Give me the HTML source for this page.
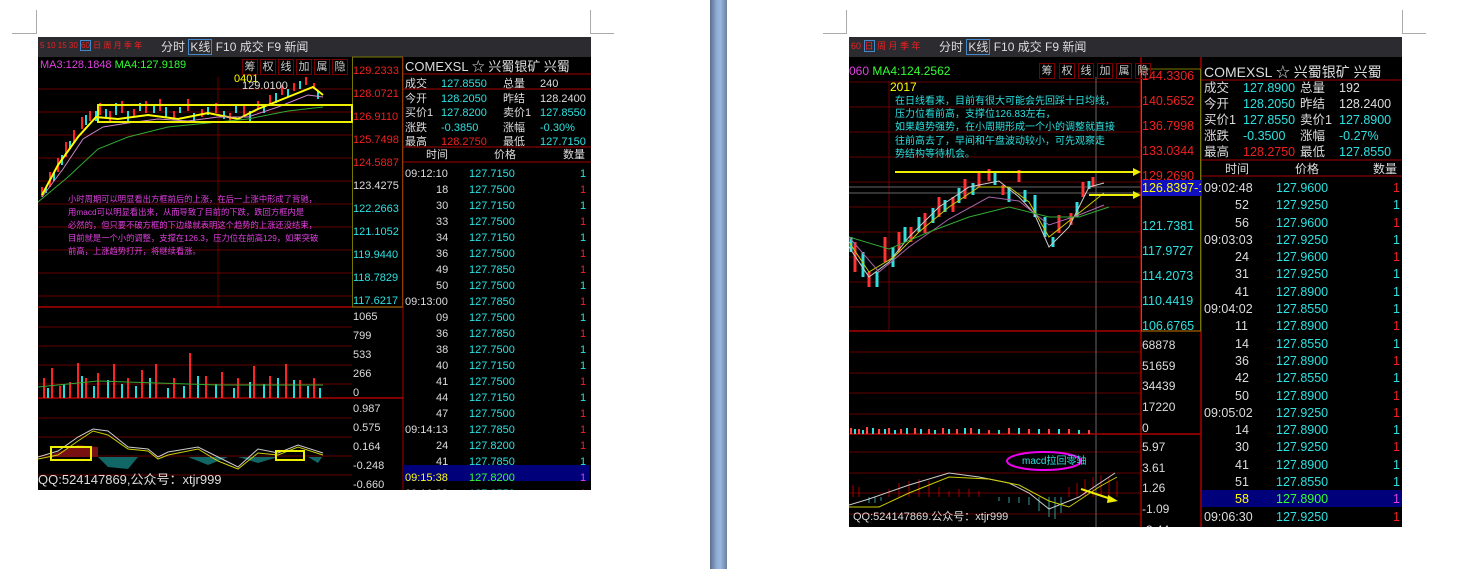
<!DOCTYPE html>
<html><head><meta charset="utf-8"><style>
*{margin:0;padding:0;box-sizing:border-box}
body{width:1479px;height:569px;background:#fff;position:relative;overflow:hidden;font-family:"Liberation Sans","Noto Sans CJK SC",sans-serif}
.a{position:absolute;white-space:nowrap;line-height:1}
.img{position:absolute;background:#000;overflow:hidden}
.tb{position:absolute;left:0;top:0;right:0;height:20px;background:#2b2b30;color:#ddd;font-size:12px}
.c{color:#2ee0e0}.r{color:#f02020}.w{color:#ddd}.y{color:#ff0}.m{color:#e040e0}.g{color:#3f3}
.f12{font-size:12px}.f11{font-size:11px}
.btn{position:absolute;top:3px;width:16px;height:16px;border:1px solid #700;font-size:11px;text-align:center;line-height:14px;color:#ccc}
</style></head><body>
<div style="position:absolute;left:36px;top:10px;width:1px;height:24px;background:#aaa"></div>
<div style="position:absolute;left:12px;top:33px;width:25px;height:1px;background:#aaa"></div>
<div style="position:absolute;left:590px;top:10px;width:1px;height:24px;background:#aaa"></div>
<div style="position:absolute;left:590px;top:33px;width:24px;height:1px;background:#aaa"></div>
<div style="position:absolute;left:846px;top:10px;width:1px;height:24px;background:#aaa"></div>
<div style="position:absolute;left:823px;top:33px;width:24px;height:1px;background:#aaa"></div>
<div style="position:absolute;left:1402px;top:10px;width:1px;height:24px;background:#aaa"></div>
<div style="position:absolute;left:1402px;top:33px;width:24px;height:1px;background:#aaa"></div>
<div style="position:absolute;left:710px;top:0;width:17px;height:569px;background:linear-gradient(90deg,#5b6f8f,#8fadd6 40%,#9bb8df 60%,#6a7fa0)"></div>

<!-- LEFT IMAGE -->
<div class="img" style="left:38px;top:37px;width:553px;height:453px">
 <div class="tb"><span class="a r" style="left:2px;top:5px;font-size:8px">5 10 15 30 <span style="border:1px solid #48c">60</span> 日 周 月 季 年</span>
 <span class="a" style="left:123px;top:4px">分时 <span style="border:1px solid #48c;padding:0 1px">K线</span> F10 成交 F9 新闻</span></div>
 <svg style="position:absolute;left:0;top:0" width="553" height="453">
  <g stroke="#600" stroke-width="1">
   <line x1="0" y1="52" x2="314" y2="52"/><line x1="0" y1="75" x2="314" y2="75"/><line x1="0" y1="98" x2="314" y2="98"/><line x1="0" y1="121" x2="314" y2="121"/><line x1="0" y1="144" x2="314" y2="144"/><line x1="0" y1="167" x2="314" y2="167"/><line x1="0" y1="190" x2="314" y2="190"/><line x1="0" y1="213" x2="314" y2="213"/><line x1="0" y1="236" x2="314" y2="236"/><line x1="0" y1="259" x2="314" y2="259"/>
   <line x1="0" y1="290" x2="314" y2="290"/><line x1="0" y1="309" x2="314" y2="309"/><line x1="0" y1="328" x2="314" y2="328"/><line x1="0" y1="347" x2="314" y2="347"/>
   <line x1="0" y1="381" x2="314" y2="381"/><line x1="0" y1="400" x2="314" y2="400"/><line x1="0" y1="419" x2="314" y2="419"/><line x1="0" y1="438" x2="314" y2="438"/>
   <line x1="180" y1="40" x2="180" y2="270"/>
  </g>
  <g stroke="#a00" stroke-width="1.5"><line x1="0" y1="270" x2="365" y2="270"/><line x1="0" y1="361" x2="365" y2="361"/></g>
  <rect x="314.5" y="20" width="50" height="250" fill="none" stroke="#770" />
  <line x1="365" y1="20" x2="365" y2="453" stroke="#a00"/>
  <g stroke="#f22" stroke-width="2">
   <path d="M4 160v-10M12 150v-15M20 135v-14M28 120v-15M36 105v-12M44 92v-12M52 84v-10M62 78v-12M72 84v-10M84 76v-12M96 80v-8M108 76v-12M122 74v-12M136 82v-8M150 74v-12M164 80v-8M178 76v-10M192 84v-8M206 78v-10M220 72v-8M232 68v-10M244 58v-10M256 54v-8M268 48v-8M276 52v-6"/>
  </g>
  <g stroke="#2dd" stroke-width="2">
   <path d="M8 156v-6M16 144v-8M24 128v-10M32 112v-8M48 88v-10M58 84v-10M68 80v-8M78 78v-12M90 84v-10M102 74v-8M116 76v-8M128 80v-10M142 76v-6M156 86v-10M170 78v-8M186 82v-8M198 76v-8M212 84v-10M226 76v-8M238 66v-10M250 60v-8M262 52v-8M280 62v-8"/>
  </g>
  <polyline fill="none" stroke="#ff0" stroke-width="2" points="4,158 20,128 40,100 58,80 80,82 110,78 140,82 170,76 200,82 220,72 250,60 275,50 285,58"/>
  <polyline fill="none" stroke="#c8c" stroke-width="1" points="4,160 25,132 45,102 65,90 90,86 120,82 150,84 180,80 210,80 240,70 270,58 285,60"/>
  <polyline fill="none" stroke="#3a3" stroke-width="1" points="0,165 30,140 60,112 90,100 130,90 170,86 210,82 250,74 285,70"/>
  <rect x="60" y="68" width="254" height="17" fill="none" stroke="#ee0" stroke-width="2"/>
  <g stroke="#f22" stroke-width="2"><path d="M6 361v-20M14 361v-30M22 361v-12M32 361v-16M40 361v-35M48 361v-20M60 361v-25M76 361v-34M90 361v-20M104 361v-28M118 361v-34M136 361v-20M152 361v-45M168 361v-22M184 361v-26M200 361v-20M216 361v-32M232 361v-22M248 361v-34M262 361v-18M276 361v-20"/></g>
  <g stroke="#2dd" stroke-width="2"><path d="M10 361v-10M26 361v-14M44 361v-22M56 361v-12M70 361v-18M84 361v-14M98 361v-12M112 361v-20M130 361v-10M146 361v-12M160 361v-22M178 361v-14M196 361v-10M212 361v-16M226 361v-14M240 361v-20M256 361v-18M270 361v-12M282 361v-10"/></g>
  <polyline fill="none" stroke="#3a3" points="0,350 60,344 120,346 180,348 240,348 285,348"/>
  <path d="M12 418 L40 408 L60 410 V420 H12Z" fill="#711"/>
  <path d="M60 420 L70 430 L90 432 L100 420Z" fill="#166"/>
  <path d="M150 420 L170 428 L190 420Z M200 420 L220 426 L240 420Z M270 420 L280 426 L284 420Z" fill="#166"/>
  <polyline fill="none" stroke="#ccc" points="0,420 20,414 40,400 55,392 70,394 90,410 110,412 120,420 130,415 160,410 180,420 200,430 220,412 240,416 260,408 285,416"/>
  <polyline fill="none" stroke="#cc0" points="0,422 20,418 40,404 55,394 70,398 90,412 110,414 120,422 130,418 160,412 180,424 200,432 220,416 240,418 260,410 285,418"/>
  <rect x="13" y="410" width="40" height="13" fill="none" stroke="#ee0" stroke-width="2"/>
  <rect x="238" y="414" width="28" height="9" fill="none" stroke="#ee0" stroke-width="2"/>
  <g stroke="#a00"><line x1="365" y1="37" x2="553" y2="37"/><line x1="365" y1="52" x2="553" y2="52"/><line x1="365" y1="110" x2="553" y2="110"/><line x1="365" y1="125" x2="553" y2="125"/></g>
 </svg>
 <span class="a m f11" style="left:2px;top:23px">MA3:128.1848 <span class="g">MA4:127.9189</span></span>
 <span class="btn" style="left:204px;top:22px">筹</span><span class="btn r" style="left:222px;top:22px">权</span><span class="btn r" style="left:240px;top:22px">线</span><span class="btn" style="left:258px;top:22px">加</span><span class="btn" style="left:276px;top:22px">属</span><span class="btn" style="left:294px;top:22px">隐</span>
 <span class="a y f11" style="left:196px;top:37px">0401</span>
 <span class="a w f11" style="left:204px;top:44px">129.0100</span>
 <div class="a m" style="left:30px;top:156px;font-size:8.3px;line-height:13px">小时周期可以明显看出方框前后的上涨，在后一上涨中形成了背驰，<br>用macd可以明显看出来，从而导致了目前的下跌，跌回方框内是<br>必然的，但只要不破方框的下边缘就表明这个趋势的上涨还没结束，<br>目前就是一个小的调整，支撑在126.3，压力位在前高129，如果突破<br>前高，上涨趋势打开，将继续看涨。</div>
 <span class="a w" style="left:0px;top:436px;font-size:13px">QQ:524147869,公众号：xtjr999</span>
 <div class="a f11" style="left:315px;top:23px;line-height:23px">
  <div class="r">129.2333</div><div class="r">128.0721</div><div class="r">126.9110</div><div class="r">125.7498</div><div class="r">124.5887</div><div class="w">123.4275</div><div class="c">122.2663</div><div class="c">121.1052</div><div class="c">119.9440</div><div class="c">118.7829</div><div class="c">117.6217</div></div>
 <div class="a w f11" style="left:315px;top:271px;line-height:19px"><div>1065</div><div>799</div><div>533</div><div>266</div><div>0</div></div>
 <div class="a w f11" style="left:315px;top:363px;line-height:19px"><div>0.987</div><div>0.575</div><div>0.164</div><div>-0.248</div><div>-0.660</div></div>
 <span class="a w f12" style="left:367px;top:23px;font-size:13px">COMEXSL ☆ 兴蜀银矿 兴蜀</span>
 <div class="a f11 w" style="left:367px;top:40px;line-height:14.5px">
  <div>成交 <span class="c" style="position:absolute;left:36px">127.8550</span><span style="position:absolute;left:98px">总量</span><span style="position:absolute;left:135px">240</span></div>
  <div>今开 <span class="c" style="position:absolute;left:36px">128.2050</span><span style="position:absolute;left:98px">昨结</span><span style="position:absolute;left:135px">128.2400</span></div>
  <div>买价1<span class="c" style="position:absolute;left:36px">127.8200</span><span style="position:absolute;left:98px">卖价1</span><span class="c" style="position:absolute;left:135px">127.8550</span></div>
  <div>涨跌 <span class="c" style="position:absolute;left:36px">-0.3850</span><span style="position:absolute;left:98px">涨幅</span><span class="c" style="position:absolute;left:135px">-0.30%</span></div>
  <div>最高 <span class="r" style="position:absolute;left:36px">128.2750</span><span style="position:absolute;left:98px">最低</span><span class="c" style="position:absolute;left:135px">127.7150</span></div>
 </div>
 <span class="a w f11" style="left:388px;top:113px">时间</span><span class="a w f11" style="left:456px;top:113px">价格</span><span class="a w f11" style="left:525px;top:113px">数量</span>
 <div style="position:absolute;left:365px;top:428px;width:186px;height:16px;background:#00007a"></div>
 <div class="a f11" style="left:367px;top:129px;line-height:16px;width:186px">
  <div class="w">09:12:10</div><div class="w" style="padding-left:31px">18</div><div class="w" style="padding-left:31px">30</div><div class="w" style="padding-left:31px">33</div><div class="w" style="padding-left:31px">34</div><div class="w" style="padding-left:31px">36</div><div class="w" style="padding-left:31px">49</div><div class="w" style="padding-left:31px">50</div><div class="w">09:13:00</div><div class="w" style="padding-left:31px">09</div><div class="w" style="padding-left:31px">36</div><div class="w" style="padding-left:31px">38</div><div class="w" style="padding-left:31px">40</div><div class="w" style="padding-left:31px">41</div><div class="w" style="padding-left:31px">44</div><div class="w" style="padding-left:31px">47</div><div class="w">09:14:13</div><div class="w" style="padding-left:31px">24</div><div class="w" style="padding-left:31px">41</div><div class="y">09:15:38</div><div class="w">09:16:38</div>
 </div>
 <div class="a f11 c" style="left:431px;top:129px;line-height:16px">
  <div>127.7150</div><div>127.7500</div><div>127.7150</div><div>127.7500</div><div>127.7150</div><div>127.7500</div><div>127.7850</div><div>127.7500</div><div>127.7850</div><div>127.7500</div><div>127.7850</div><div>127.7500</div><div>127.7150</div><div>127.7500</div><div>127.7150</div><div>127.7500</div><div>127.7850</div><div>127.8200</div><div>127.7850</div><div class="g">127.8200</div><div>127.8550</div>
 </div>
 <div class="a f11" style="left:542px;top:129px;line-height:16px">
  <div class="c">1</div><div class="r">1</div><div class="c">1</div><div class="r">1</div><div class="c">1</div><div class="r">1</div><div class="r">1</div><div class="c">1</div><div class="r">1</div><div class="c">1</div><div class="r">1</div><div class="c">1</div><div class="c">1</div><div class="r">1</div><div class="c">1</div><div class="r">1</div><div class="r">1</div><div class="r">1</div><div class="c">1</div><div class="m">1</div><div class="r">1</div>
 </div>
</div>

<!-- RIGHT IMAGE -->
<div class="img" style="left:849px;top:37px;width:553px;height:490px">
 <div class="tb"><span class="a r" style="left:2px;top:5px;font-size:9px">60 <span style="border:1px solid #48c">日</span> 周 月 季 年</span>
 <span class="a" style="left:90px;top:4px">分时 <span style="border:1px solid #48c;padding:0 1px">K线</span> F10 成交 F9 新闻</span></div>
 <svg style="position:absolute;left:0;top:0" width="553" height="490">
  <g stroke="#600">
   <line x1="0" y1="45" x2="292" y2="45"/><line x1="0" y1="70" x2="292" y2="70"/><line x1="0" y1="95" x2="292" y2="95"/><line x1="0" y1="120" x2="292" y2="120"/><line x1="0" y1="145" x2="292" y2="145"/><line x1="0" y1="170" x2="292" y2="170"/><line x1="0" y1="195" x2="292" y2="195"/><line x1="0" y1="220" x2="292" y2="220"/><line x1="0" y1="245" x2="292" y2="245"/><line x1="0" y1="270" x2="292" y2="270"/>
   <line x1="0" y1="315" x2="292" y2="315"/><line x1="0" y1="336" x2="292" y2="336"/><line x1="0" y1="356" x2="292" y2="356"/><line x1="0" y1="377" x2="292" y2="377"/>
   <line x1="0" y1="415" x2="292" y2="415"/><line x1="0" y1="436" x2="292" y2="436"/><line x1="0" y1="456" x2="292" y2="456"/><line x1="0" y1="477" x2="292" y2="477"/>
   <line x1="40" y1="45" x2="40" y2="294"/>
  </g>
  <g stroke="#666"><line x1="0" y1="150" x2="292" y2="150"/><line x1="0" y1="156" x2="292" y2="156"/><line x1="247" y1="40" x2="247" y2="490"/></g>
  <g stroke="#a00" stroke-width="1.5"><line x1="0" y1="294" x2="352" y2="294"/><line x1="0" y1="397" x2="352" y2="397"/><line x1="292" y1="20" x2="292" y2="490"/><line x1="352" y1="20" x2="352" y2="490"/></g>
  <rect x="292.5" y="32" width="59" height="262" fill="none" stroke="#770"/>
  <g stroke="#f33" stroke-width="3"><path d="M6 235v-30M20 250v-15M36 225v-25M50 215v-20M62 205v-15M76 196v-20M90 180v-20M104 175v-15M116 162v-20M130 150v-15M140 144v-12M154 158v-10M170 145v-12M210 196v-18M222 188v-12M234 160v-15M244 150v-10"/></g>
  <g stroke="#3dd" stroke-width="3"><path d="M2 215v-15M14 240v-25M28 250v-15M44 230v-20M56 205v-15M70 195v-15M84 186v-15M96 175v-12M110 166v-15M124 158v-12M146 148v-12M160 165v-15M176 165v-12M186 180v-22M196 200v-20M204 210v-10M228 180v-15M240 152v-8"/></g>
  <polyline fill="none" stroke="#ccc" points="0,210 20,240 40,225 60,200 90,170 120,150 150,144 170,160 185,176 200,210 220,190 240,150 255,146"/>
  <polyline fill="none" stroke="#cc0" points="0,205 20,235 45,220 70,195 100,170 130,150 160,150 180,165 200,200 225,180 255,156"/>
  <polyline fill="none" stroke="#a6a" points="0,200 30,235 60,210 100,182 140,160 170,164 200,188 230,178 255,168"/>
  <polyline fill="none" stroke="#3a3" points="0,200 40,212 80,195 120,180 160,170 200,180 230,180 260,170"/>
  <line x1="46" y1="135" x2="290" y2="135" stroke="#ee0" stroke-width="2"/><polygon points="292,135 284,131 284,139" fill="#ee0"/>
  <line x1="240" y1="158" x2="290" y2="158" stroke="#ee0" stroke-width="2"/><polygon points="292,158 284,154 284,162" fill="#ee0"/>
  <g stroke="#f44" stroke-width="2"><path d="M2 397v-6M10 397v-5M18 397v-7M30 397v-5M40 397v-6M52 397v-5M66 397v-6M80 397v-5M94 397v-6M108 397v-5M122 397v-6M140 397v-4M160 397v-6M180 397v-5M200 397v-5M220 397v-5M240 397v-4"/></g>
  <g stroke="#3dd" stroke-width="2"><path d="M6 397v-5M14 397v-4M24 397v-6M36 397v-5M46 397v-4M58 397v-6M72 397v-5M86 397v-4M100 397v-5M116 397v-6M130 397v-5M150 397v-4M170 397v-6M190 397v-5M210 397v-5M230 397v-4"/></g>
  <g stroke="#a00"><path d="M4 460v-12M10 460v-10M40 460v-8M50 460v-14M60 460v-16M70 460v-18M80 460v-16M90 460v-10M100 460v-6M110 460v-8M120 460v-8M130 460v-6M220 460v-10M228 460v-14M236 460v-18M244 460v-20M252 460v-22M260 460v-20M268 460v-16"/></g>
  <g stroke="#399"><path d="M20 460v6M26 460v6M32 460v4M150 460v4M160 460v6M170 460v6M180 460v8M190 460v14M200 460v20M206 460v22M212 460v16"/></g>
  <polyline fill="none" stroke="#ccc" points="0,468 20,462 60,448 100,436 130,440 160,446 180,456 200,472 230,460 260,440 266,436"/>
  <polyline fill="none" stroke="#cc0" points="0,470 30,470 60,456 100,440 140,442 170,448 200,464 220,470 250,450 268,440"/>
  <line x1="232" y1="452" x2="262" y2="462" stroke="#ee0" stroke-width="2"/><polygon points="269,464 259,458 258,466" fill="#ee0"/>
  <ellipse cx="195" cy="424" rx="37" ry="9" fill="none" stroke="#e0e" stroke-width="2"/>
  <g stroke="#a00"><line x1="352" y1="43" x2="553" y2="43"/><line x1="352" y1="123" x2="553" y2="123"/><line x1="352" y1="139" x2="553" y2="139"/></g>
 </svg>
 <span class="a m f12" style="left:0px;top:28px">060 <span class="g">MA4:124.2562</span></span>
 <span class="btn" style="left:190px;top:26px">筹</span><span class="btn r" style="left:210px;top:26px">权</span><span class="btn r" style="left:229px;top:26px">线</span><span class="btn" style="left:248px;top:26px">加</span><span class="btn" style="left:267px;top:26px">属</span><span class="btn" style="left:286px;top:26px">隐</span>
 <span class="a y f12" style="left:41px;top:44px">2017</span>
 <div class="a c" style="left:46px;top:58px;font-size:10px;line-height:13.2px">在日线看来，目前有很大可能会先回踩十日均线，<br>压力位看前高，支撑位126.83左右，<br>如果趋势强势，在小周期形成一个小的调整就直接<br>往前高去了，早间和午盘波动较小，可先观察走<br>势结构等待机会。</div>
 <span class="a c" style="left:173px;top:420px;font-size:10px">macd拉回零轴</span>
 <span class="a w" style="left:4px;top:475px;font-size:11px">QQ:524147869.公众号：xtjr999</span>
 <div class="a" style="left:293px;top:27px;line-height:25px;font-size:12.5px">
  <div class="r">144.3306</div><div class="r">140.5652</div><div class="r">136.7998</div><div class="r">133.0344</div><div class="r">129.2690</div><div class="c">&nbsp;</div><div class="c">121.7381</div><div class="c">117.9727</div><div class="c">114.2073</div><div class="c">110.4419</div><div class="c">106.6765</div></div>
 <div class="a y" style="left:293px;top:143px;width:59px;height:16px;background:#1010c0;line-height:16px;overflow:hidden;font-size:12.5px">126.8397-1</div>
 <div class="a w" style="left:293px;top:298px;line-height:20.7px;font-size:12px"><div>68878</div><div>51659</div><div>34439</div><div>17220</div><div>0</div></div>
 <div class="a w" style="left:293px;top:400px;line-height:20.7px;font-size:12px"><div>5.97</div><div>3.61</div><div>1.26</div><div>-1.09</div><div>-3.44</div></div>
 <span class="a w" style="left:355px;top:28px;font-size:14px">COMEXSL ☆ 兴蜀银矿 兴蜀</span>
 <div class="a w" style="left:355px;top:43px;line-height:16px;width:198px;font-size:12.5px">
  <div>成交<span class="c" style="position:absolute;left:39px">127.8900</span><span style="position:absolute;left:96px">总量</span><span style="position:absolute;left:135px">192</span></div>
  <div>今开<span class="c" style="position:absolute;left:39px">128.2050</span><span style="position:absolute;left:96px">昨结</span><span style="position:absolute;left:135px">128.2400</span></div>
  <div>买价1<span class="c" style="position:absolute;left:39px">127.8550</span><span style="position:absolute;left:96px">卖价1</span><span class="c" style="position:absolute;left:135px">127.8900</span></div>
  <div>涨跌<span class="c" style="position:absolute;left:39px">-0.3500</span><span style="position:absolute;left:96px">涨幅</span><span class="c" style="position:absolute;left:135px">-0.27%</span></div>
  <div>最高<span class="r" style="position:absolute;left:39px">128.2750</span><span style="position:absolute;left:96px">最低</span><span class="c" style="position:absolute;left:135px">127.8550</span></div>
 </div>
 <span class="a w f12" style="left:376px;top:126px">时间</span><span class="a w f12" style="left:446px;top:126px">价格</span><span class="a w f12" style="left:524px;top:126px">数量</span>
 <div style="position:absolute;left:353px;top:453px;width:200px;height:17px;background:#00007a"></div>
 <div class="a w" style="left:355px;top:143px;line-height:17.3px;font-size:12.5px">
  <div>09:02:48</div><div style="padding-left:31px">52</div><div style="padding-left:31px">56</div><div>09:03:03</div><div style="padding-left:31px">24</div><div style="padding-left:31px">31</div><div style="padding-left:31px">41</div><div>09:04:02</div><div style="padding-left:31px">11</div><div style="padding-left:31px">14</div><div style="padding-left:31px">36</div><div style="padding-left:31px">42</div><div style="padding-left:31px">50</div><div>09:05:02</div><div style="padding-left:31px">14</div><div style="padding-left:31px">30</div><div style="padding-left:31px">41</div><div style="padding-left:31px">51</div><div class="y" style="padding-left:31px">58</div><div>09:06:30</div>
 </div>
 <div class="a c" style="left:427px;top:143px;line-height:17.3px;font-size:12.5px">
  <div>127.9600</div><div>127.9250</div><div>127.9600</div><div>127.9250</div><div>127.9600</div><div>127.9250</div><div>127.8900</div><div>127.8550</div><div>127.8900</div><div>127.8550</div><div>127.8900</div><div>127.8550</div><div>127.8900</div><div>127.9250</div><div>127.8900</div><div>127.9250</div><div>127.8900</div><div>127.8550</div><div class="g">127.8900</div><div>127.9250</div>
 </div>
 <div class="a" style="left:544px;top:143px;line-height:17.3px;font-size:12.5px">
  <div class="r">1</div><div class="c">1</div><div class="r">1</div><div class="c">1</div><div class="r">1</div><div class="c">1</div><div class="c">1</div><div class="c">1</div><div class="r">1</div><div class="c">1</div><div class="r">1</div><div class="c">1</div><div class="r">1</div><div class="r">1</div><div class="c">1</div><div class="r">1</div><div class="c">1</div><div class="c">1</div><div class="m">1</div><div class="r">1</div>
 </div>
</div>
</body></html>
